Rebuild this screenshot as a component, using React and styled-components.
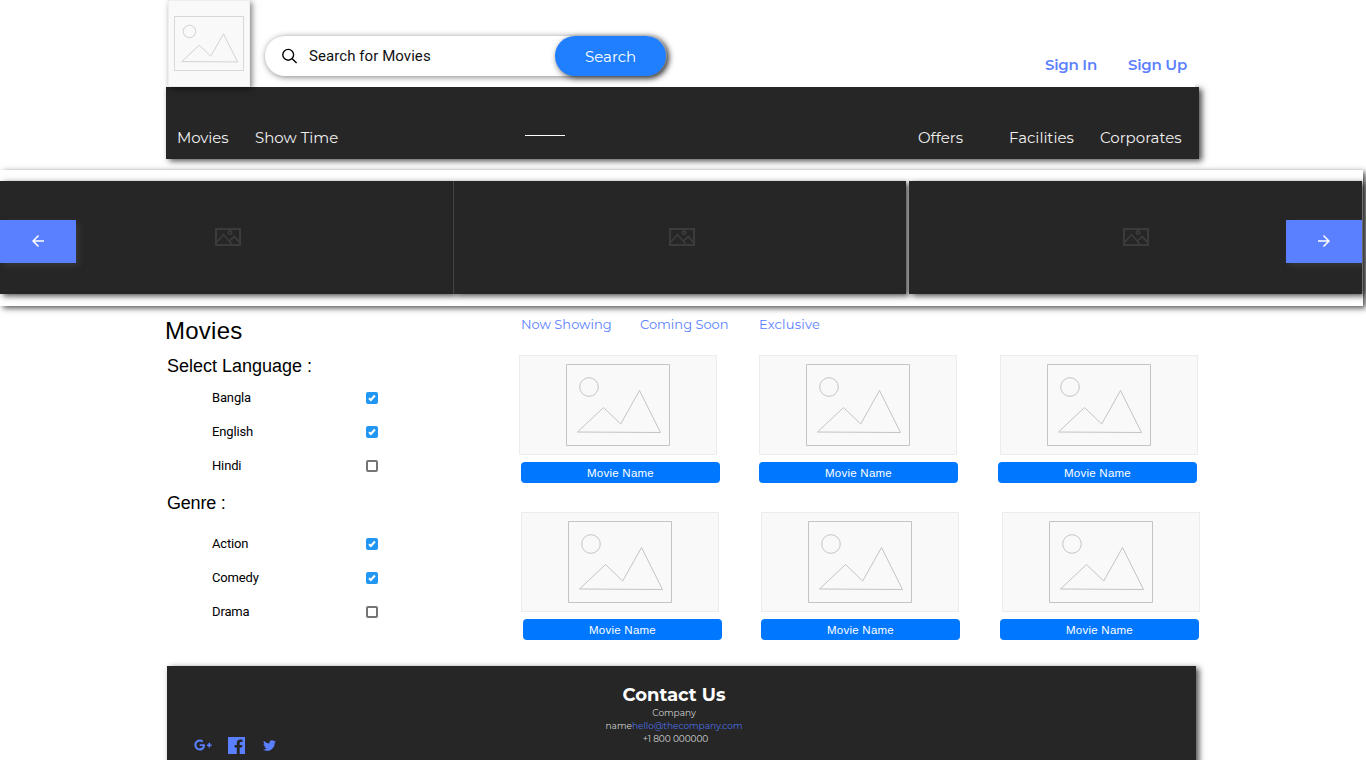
import React from "react";
import styled, { createGlobalStyle } from "styled-components";
import { MdArrowBack, MdArrowForward } from "react-icons/md";
import { FaGooglePlusG, FaTwitter } from "react-icons/fa";

const shadow = "3px 2px 6px rgba(0, 0, 0, 0.7)";
const ink = "#262626";
const accent = "#5b80ff";

const GlobalStyle = createGlobalStyle`
  * { box-sizing: border-box; }
  body { margin: 0; background: #fff; color: #000; overflow: hidden; }
`;

const Page = styled.div`
  width: 1366px;
  height: 760px;
  overflow: hidden;
  display: flex;
  flex-direction: column;
  font-family: "Liberation Sans", Arial, sans-serif;
`;

const Display = styled.span`
  display: inline-block;
  white-space: nowrap;
  font-family: Montserrat, Inter, sans-serif;
  font-size: ${(p) => p.$size || 15}px;
  font-weight: ${(p) => p.$weight || 400};
  letter-spacing: ${(p) => p.$track || 0}px;
  line-height: 20px;
  color: ${(p) => p.$color || "#fff"};
  margin-left: ${(p) => p.$gap || 0}px;
  width: ${(p) => (p.$width ? p.$width + "px" : "auto")};
`;

const Header = styled.header`
  position: relative;
  z-index: 1;
  display: flex;
  align-items: flex-start;
  width: 1195px;
  height: 87px;
  padding-left: 168px;
  background: #fff;
`;

const Logo = styled.div`
  width: 82px;
  height: 87px;
  padding: 15px 0 0 5px;
  background: #f9f9f9;
  border: 1px solid #eee;
  box-shadow: 2px 2px 6px rgba(0, 0, 0, 0.5);
`;

const SearchBar = styled.div`
  display: flex;
  align-items: center;
  width: 402px;
  height: 40px;
  margin: 36px 0 0 15px;
  padding-left: 17px;
  border-radius: 20px;
  background: #fff;
  box-shadow: 1px 1px 6px rgba(0, 0, 0, 0.5);
`;

const SearchText = styled.span`
  width: 246px;
  margin-left: 11px;
  font: 15px/20px Roboto, sans-serif;
  letter-spacing: 0.07px;
  color: #111;
`;

const SearchButton = styled.div`
  width: 111px;
  height: 40px;
  border-radius: 20px;
  padding: 11px 0 0 30px;
  line-height: 0;
  background: #1f7fff;
  box-shadow: 2px 2px 6px rgba(0, 0, 0, 0.7);
`;

const Account = styled.div`
  display: flex;
  margin: 55px 0 0 378px;
`;

const Nav = styled.nav`
  display: flex;
  align-items: flex-start;
  width: 1033px;
  height: 72px;
  flex: none;
  margin-left: 166px;
  padding: 41px 0 0 11px;
  background: ${ink};
  box-shadow: ${shadow};
`;

const NavRule = styled.span`
  width: 40px;
  height: 1px;
  margin: 7px 0 0 180px;
  background: #fff;
`;

const Carousel = styled.section`
  position: relative;
  display: flex;
  flex: none;
  width: 1363px;
  height: 136px;
  margin-top: 11px;
  padding: 11px 0 12px;
  background: #fff;
  box-shadow: ${shadow};
`;

const Slide = styled.div`
  display: flex;
  align-items: flex-start;
  width: 453px;
  padding: 47px 0 0 ${(p) => p.$inset}px;
  margin-right: ${(p) => p.$gap || 0}px;
  border-left: ${(p) => (p.$divided ? "1px solid #444" : "0")};
  background: ${ink};
  box-shadow: ${shadow};
`;

const Arrow = styled.div`
  position: absolute;
  top: 50px;
  ${(p) => p.$side}: ${(p) => (p.$side === "left" ? 0 : 1)}px;
  display: flex;
  align-items: center;
  justify-content: center;
  width: 76px;
  height: 43px;
  padding-bottom: 1px;
  color: #fff;
  font-size: 18px;
  background: ${accent};
  box-shadow: 3px 3px 6px rgba(90, 90, 90, 0.35);
`;

const Main = styled.main`
  display: flex;
  flex: none;
  height: 360px;
  padding-left: 165px;
`;

const Sidebar = styled.aside`
  width: 354px;
  padding-top: 9px;
`;

const Title = styled.h1`
  margin: 0 0 8px;
  font-size: 24px;
  font-weight: 400;
  line-height: 32px;
  letter-spacing: 0.25px;
`;

const GroupTitle = styled.h2`
  margin: ${(p) => p.$before || 0}px 0 ${(p) => p.$after}px 2px;
  font-size: 18px;
  font-weight: 400;
  line-height: 22px;
  letter-spacing: ${(p) => p.$track || 0}px;
`;

const Option = styled.label`
  display: flex;
  align-items: center;
  justify-content: space-between;
  width: 166px;
  height: 34px;
  margin-left: 47px;
  font: 13px/18px Roboto, sans-serif;
  letter-spacing: -0.15px;
`;

const Box = styled.span`
  display: block;
  width: 12px;
  height: 12px;
  border-radius: 2px;
  border: ${(p) => (p.$on ? "0" : "2px solid #757575")};
  background: ${(p) => (p.$on ? "#2196f3" : "#fff")};
`;

const Tick = styled.svg`
  display: block;
`;

const Content = styled.section`
  padding-top: 8px;
`;

const Tabs = styled.div`
  display: flex;
  height: 41px;
  padding-left: 2px;
`;

const CardRow = styled.div`
  display: grid;
  grid-template-columns: 240px 241px 198px;
  height: 157px;
  margin-left: ${(p) => p.$shift || 0}px;
`;

const Thumb = styled.div`
  width: 198px;
  height: 100px;
  padding: 8px 0 0 46px;
  border: 1px solid #ececec;
  background: #f9f9f9;
`;

const CardLabel = styled.div`
  width: 199px;
  height: 21px;
  margin: 7px 0 0 ${(p) => p.$shift}px;
  border-radius: 4px;
  background: #0077ff;
  color: #fff;
  font-size: 11.5px;
  line-height: 22px;
  letter-spacing: 0.25px;
  text-align: center;
`;

const Footer = styled.footer`
  display: flex;
  flex: none;
  width: 1029px;
  height: 110px;
  margin-left: 167px;
  background: ${ink};
  box-shadow: ${shadow};
`;

const Social = styled.div`
  display: flex;
  align-items: center;
  gap: 16px;
  height: 18px;
  width: 360px;
  margin-top: 70px;
  padding-left: 27px;
  color: ${accent};
`;

const TwitterIcon = styled(FaTwitter)`
  margin-left: 2px;
`;

const Contact = styled.div`
  display: flex;
  flex-direction: column;
  align-items: center;
  width: 294px;
  padding-top: 19px;
`;

const ContactLines = styled.div`
  margin-top: 1px;
  font: 400 9px/13px Montserrat, Inter, sans-serif;
  color: #d0d0d0;
  text-align: center;
  white-space: nowrap;
`;

const ContactLine = styled.div`
  letter-spacing: ${(p) => p.$track || 0}px;
  padding-left: ${(p) => p.$indent || 0}px;
`;

const Mail = styled.span`
  color: #4c6fe0;
`;

function Picture({ width, height, stroke }) {
  return (
    <svg width={width} height={height} viewBox="0 0 104 82" preserveAspectRatio="none" fill="none" stroke={stroke}>
      <rect x="0.5" y="0.5" width="103" height="81" vectorEffect="non-scaling-stroke" />
      <circle cx="23" cy="23" r="9.3" vectorEffect="non-scaling-stroke" />
      <path d="M11.5 68 37.5 43.5 54.7 60 73.5 26.5 94.5 68.5Z" vectorEffect="non-scaling-stroke" />
    </svg>
  );
}

function SlidePicture() {
  return (
    <svg width="26" height="18" viewBox="0 0 26 18" fill="none" stroke="#3b3b3b" strokeWidth="2">
      <rect x="1" y="1" width="24" height="16" />
      <circle cx="15" cy="4.6" r="1.7" strokeWidth="1.6" />
      <path strokeWidth="1.8" d="M1 15 8.5 6.5 17.5 17M14.5 12.8 19.2 8.6 25 14.8" />
    </svg>
  );
}

function SearchIcon() {
  return (
    <svg width="16" height="16" viewBox="0 0 16 16" fill="none" stroke="#000" strokeWidth="1.4">
      <circle cx="6.2" cy="6.8" r="5.4" />
      <path d="M10.2 10.8 14.6 15" />
    </svg>
  );
}

function FacebookIcon() {
  return (
    <svg width="17" height="17" viewBox="0 0 17 17">
      <path fill={accent} d="M0 0H17V17H11.7V10.5H14L14.4 7.9H11.7V6.3C11.7 5.4 12.1 5 13 5H14.5V2.5H12.3C10 2.5 8.8 3.8 8.8 6V7.9H6.6V10.5H8.8V17H0Z" />
    </svg>
  );
}

function Check({ label, on }) {
  return (
    <Option>
      {label}
      <Box $on={on}>
        {on && (
          <Tick width="12" height="12" viewBox="0 0 12 12" fill="none" stroke="#fff" strokeWidth="2.2">
            <path d="M3 6.2 4.9 8 8.9 3.6" />
          </Tick>
        )}
      </Box>
    </Option>
  );
}

function Card({ shift }) {
  return (
    <div>
      <Thumb>
        <Picture width={104} height={82} stroke="#c4c4c4" />
      </Thumb>
      <CardLabel $shift={shift}>Movie Name</CardLabel>
    </div>
  );
}

const languages = [["Bangla", true], ["English", true], ["Hindi", false]];
const genres = [["Action", true], ["Comedy", true], ["Drama", false]];
const labelShifts = [2, 0, -2];

export default function App() {
  return (
    <Page>
      <GlobalStyle />
      <Header>
        <Logo>
          <Picture width={70} height={55} stroke="#d2d2d2" />
        </Logo>
        <SearchBar>
          <SearchIcon />
          <SearchText>Search for Movies</SearchText>
          <SearchButton>
            <Display>Search</Display>
          </SearchButton>
        </SearchBar>
        <Account>
          <Display $weight={600} $track={-0.25} $color={accent} $width={83}>Sign In</Display>
          <Display $weight={600} $track={-0.25} $color={accent}>Sign Up</Display>
        </Account>
      </Header>
      <Nav>
        <Display $track={-0.1} $color="#f0f0f0" $width={78}>Movies</Display>
        <Display $color="#f0f0f0" $width={90}>Show Time</Display>
        <NavRule />
        <Display $color="#f0f0f0" $gap={353} $width={91}>Offers</Display>
        <Display $color="#f0f0f0" $width={91}>Facilities</Display>
        <Display $color="#f0f0f0">Corporates</Display>
      </Nav>
      <Carousel>
        <Slide $inset={215}><SlidePicture /></Slide>
        <Slide $inset={215} $divided $gap={3}><SlidePicture /></Slide>
        <Slide $inset={214}><SlidePicture /></Slide>
        <Arrow $side="left"><MdArrowBack /></Arrow>
        <Arrow $side="right"><MdArrowForward /></Arrow>
      </Carousel>
      <Main>
        <Sidebar>
          <Title>Movies</Title>
          <GroupTitle $after={4}>Select Language :</GroupTitle>
          {languages.map(([label, on]) => <Check key={label} label={label} on={on} />)}
          <GroupTitle $before={9} $after={13} $track={-0.2}>Genre :</GroupTitle>
          {genres.map(([label, on]) => <Check key={label} label={label} on={on} />)}
        </Sidebar>
        <Content>
          <Tabs>
            <Display $size={13} $color={accent} $width={119}>Now Showing</Display>
            <Display $size={13} $color={accent} $width={119}>Coming Soon</Display>
            <Display $size={13} $track={0.2} $color={accent}>Exclusive</Display>
          </Tabs>
          <CardRow>{labelShifts.map((s) => <Card key={s} shift={s} />)}</CardRow>
          <CardRow $shift={2}>{labelShifts.map((s) => <Card key={s} shift={s} />)}</CardRow>
        </Content>
      </Main>
      <Footer>
        <Social>
          <FaGooglePlusG size={18} />
          <FacebookIcon />
          <TwitterIcon size={13} />
        </Social>
        <Contact>
          <Display $size={18} $weight={700}>Contact Us</Display>
          <ContactLines>
            <ContactLine>Company</ContactLine>
            <ContactLine>name<Mail>hello@thecompany.com</Mail></ContactLine>
            <ContactLine $track={-0.08} $indent={3}>+1 800 000000</ContactLine>
          </ContactLines>
        </Contact>
      </Footer>
    </Page>
  );
}
